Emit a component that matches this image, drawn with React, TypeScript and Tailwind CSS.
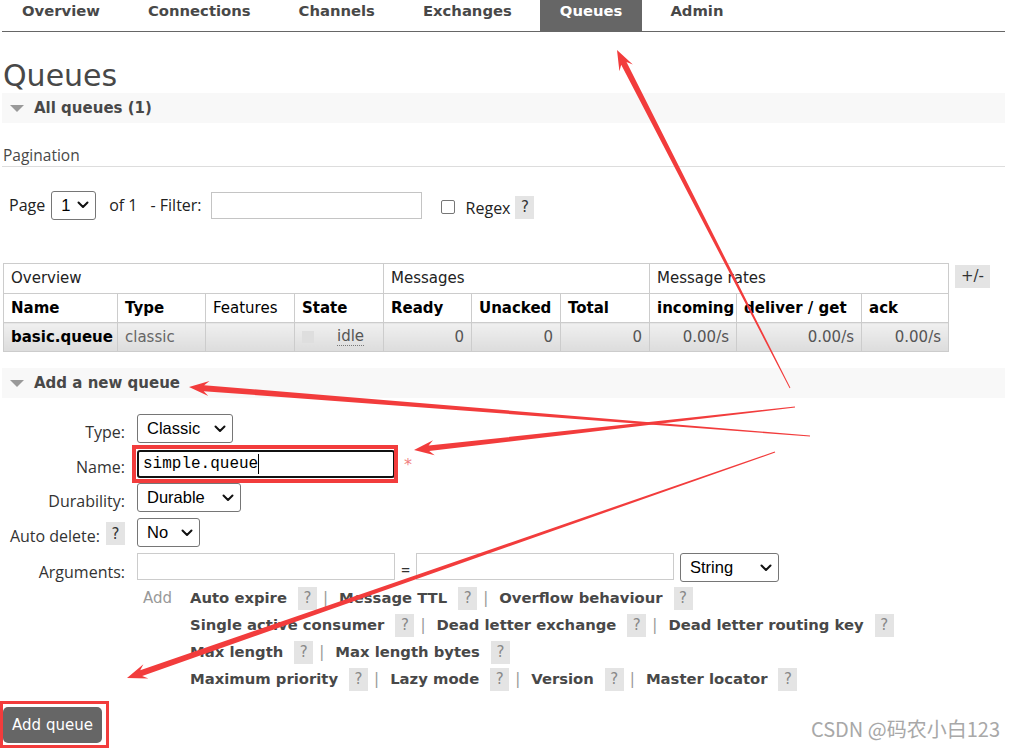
import React from "react";

const SANS = "font-['DejaVu_Sans','Verdana',sans-serif]";
const UI = "font-['Open_Sans','Noto_Sans',sans-serif]";
const ARIAL = "font-['Liberation_Sans','Arial',sans-serif]";

function Chevron() {
  return (
    <svg width="12" height="8" viewBox="0 0 12 8" className="shrink-0">
      <path d="M1.5 1.5 L6 6 L10.5 1.5" stroke="#111" strokeWidth="2" fill="none" strokeLinecap="round" strokeLinejoin="round" />
    </svg>
  );
}

function Sel({ w, label }: { w: string; label: string }) {
  return (
    <div
      className={`flex items-center justify-between ${w} h-[29px] border border-[#767676] rounded-[3px] bg-white pl-[9px] pr-[6px] ${ARIAL} text-[16.5px] text-black`}
    >
      <span>{label}</span>
      <Chevron />
    </div>
  );
}

function Help({ dark }: { dark?: boolean }) {
  return (
    <span
      className={`inline-flex items-center justify-center w-[19px] h-[23px] bg-[#e4e4e4] ${SANS} text-[15px] font-normal ${
        dark ? "text-[#333]" : "text-[#888]"
      }`}
    >
      ?
    </span>
  );
}

type Pt = [number, number];
function arrowPts(hx: number, hy: number, tx: number, ty: number, headLen: number, headW: number, wNear: number, wFar: number) {
  const dx = tx - hx;
  const dy = ty - hy;
  const len = Math.hypot(dx, dy);
  const ux = dx / len;
  const uy = dy / len;
  const nx = -uy;
  const ny = ux;
  const bx = hx + ux * headLen;
  const by = hy + uy * headLen;
  const nxp = hx + ux * (headLen - 5);
  const nyp = hy + uy * (headLen - 5);
  const pts: Pt[] = [
    [hx, hy],
    [bx + (nx * headW) / 2, by + (ny * headW) / 2],
    [nxp + (nx * wNear) / 2, nyp + (ny * wNear) / 2],
    [tx + (nx * wFar) / 2, ty + (ny * wFar) / 2],
    [tx - (nx * wFar) / 2, ty - (ny * wFar) / 2],
    [nxp - (nx * wNear) / 2, nyp - (ny * wNear) / 2],
    [bx - (nx * headW) / 2, by - (ny * headW) / 2],
  ];
  return pts.map((p) => `${p[0].toFixed(1)},${p[1].toFixed(1)}`).join(" ");
}

const tabs = ["Overview", "Connections", "Channels", "Exchanges", "Queues", "Admin"];

const props: string[][] = [
  ["Auto expire", "Message TTL", "Overflow behaviour"],
  ["Single active consumer", "Dead letter exchange", "Dead letter routing key"],
  ["Max length", "Max length bytes"],
  ["Maximum priority", "Lazy mode", "Version", "Master locator"],
];

function SectionHeader({ title }: { title: string }) {
  return (
    <div className="flex items-center h-[30px] bg-[#f8f8f8]">
      <svg width="14" height="7" viewBox="0 0 14 7" className="ml-[8px]">
        <polygon points="0,0 14,0 7,7" fill="#999" />
      </svg>
      <span className={`ml-[10px] ${SANS} font-bold text-[15px] text-[#484848]`}>{title}</span>
    </div>
  );
}

export default function App() {
  const th1 = `border border-[#ccc] text-left font-normal px-[7px] h-[30px] text-[#222]`;
  const th2 = `border border-[#ccc] text-left font-bold px-[7px] h-[29px] text-black`;
  const td = `border border-[#ccc] px-[7px] h-[29px] bg-linear-to-b from-[#f0f0f0] to-[#dcdcdc]`;
  const num = `${td} text-right text-[#555]`;

  return (
    <div className={`relative w-[1012px] h-[748px] overflow-hidden bg-white ${SANS} text-[15px] text-[#484848]`}>
      <div className="pl-[2px] pr-[7px]">
        {/* nav */}
        <div className="flex h-[32px] border-b border-[#666]">
          {tabs.map((t) => (
            <div
              key={t}
              className={`h-[31px] px-[20px] mr-[8px] pt-[2px] leading-[18px] font-bold text-[14.8px] ${
                t === "Queues" ? "bg-[#666] text-white" : "text-[#484848]"
              }`}
            >
              {t}
            </div>
          ))}
        </div>

        <h1 className="mt-[26px] ml-[1px] text-[30px] leading-[35px] font-normal text-[#484848]">Queues</h1>

        <SectionHeader title="All queues (1)" />

        <div className={`mt-[22px] pl-[1px] h-[22px] leading-[21px] border-b border-[#ddd] ${UI} text-[15.5px] text-[#484848]`}>
          Pagination
        </div>

        {/* pagination row */}
        <div className={`mt-[23px] flex items-center h-[30px] ${UI} text-[16px] text-[#222]`}>
          <span className="ml-[7px]">Page</span>
          <div className="ml-[6px]">
            <Sel w="w-[45px]" label="1" />
          </div>
          <span className="ml-[13px]">of 1</span>
          <span className="ml-[13px]">- Filter:</span>
          <div className="ml-[9px] w-[211px] h-[27px] border border-[#c4c4c4] bg-white" />
          <div className="ml-[19px] mt-[4px] w-[14px] h-[14px] border border-[#767676] rounded-[2px] bg-white" />
          <span className="ml-[11px] mt-[6px]">Regex</span>
          <span className="ml-[5px] mt-[3px]">
            <Help dark />
          </span>
        </div>

        {/* table */}
        <div className="mt-[43px] ml-[1px] flex items-start">
          <table className="table-fixed border-collapse w-[946px] text-[15px]">
            <colgroup>
              <col className="w-[114px]" />
              <col className="w-[88px]" />
              <col className="w-[89px]" />
              <col className="w-[89px]" />
              <col className="w-[88px]" />
              <col className="w-[89px]" />
              <col className="w-[89px]" />
              <col className="w-[87px]" />
              <col className="w-[125px]" />
              <col className="w-[87px]" />
            </colgroup>
            <thead>
              <tr>
                <th colSpan={4} className={th1}>Overview</th>
                <th colSpan={3} className={th1}>Messages</th>
                <th colSpan={3} className={th1}>Message rates</th>
              </tr>
              <tr>
                <th className={th2}>Name</th>
                <th className={th2}>Type</th>
                <th className={`${th2} font-normal`}>Features</th>
                <th className={th2}>State</th>
                <th className={th2}>Ready</th>
                <th className={th2}>Unacked</th>
                <th className={th2}>Total</th>
                <th className={th2}>incoming</th>
                <th className={th2}>deliver / get</th>
                <th className={th2}>ack</th>
              </tr>
            </thead>
            <tbody>
              <tr>
                <td className={`${td} font-bold text-black`}>basic.queue</td>
                <td className={`${td} text-[#666]`}>classic</td>
                <td className={td}></td>
                <td className={td}>
                  <div className="flex items-center">
                    <span className="w-[12px] h-[12px] bg-[#dedede]" />
                    <span className="ml-[23px] text-[#555] border-b border-dotted border-[#777] leading-[17px]">idle</span>
                  </div>
                </td>
                <td className={num}>0</td>
                <td className={num}>0</td>
                <td className={num}>0</td>
                <td className={num}>0.00/s</td>
                <td className={num}>0.00/s</td>
                <td className={num}>0.00/s</td>
              </tr>
            </tbody>
          </table>
          <div className="ml-[6px] mt-[2px] w-[35px] h-[23px] bg-[#e4e4e4] flex items-center justify-center text-[#333] text-[15px]">
            +/-
          </div>
        </div>

        <div className="mt-[16px]">
          <SectionHeader title="Add a new queue" />
        </div>

        {/* form */}
        <div className={`mt-[16px] flex flex-col`}>
          <div className="flex items-center h-[29px]">
            <div className={`w-[123px] text-right pt-[6px] ${UI} text-[16px] leading-[20px] text-[#333]`}>Type:</div>
            <div className="ml-[12px]">
              <Sel w="w-[96px]" label="Classic" />
            </div>
          </div>

          <div className="mt-[7px] flex items-center h-[27px]">
            <div className={`w-[123px] text-right pt-[6px] ${UI} text-[16px] leading-[20px] text-[#333]`}>Name:</div>
            <div className="ml-[12px] relative">
              <div className="w-[258px] h-[28px] border-2 border-[#111] rounded-[3px] bg-white flex items-center pl-[4px] font-['Liberation_Mono','Courier_New',monospace] text-[16px] text-black">
                <span>simple.queue</span>
                <span className="w-[1px] h-[20px] bg-black" />
              </div>
              <span className="absolute left-[-5px] right-[-3px] top-[-5px] bottom-[-5px] border-[4px] border-[#f23c3c]" />
            </div>
            <span className={`ml-[9px] mt-[2px] text-[#f08080] text-[16px] ${SANS}`}>*</span>
          </div>

          <div className="mt-[6px] flex items-center h-[29px]">
            <div className={`w-[123px] text-right pt-[6px] ${UI} text-[16px] leading-[20px] text-[#333]`}>Durability:</div>
            <div className="ml-[12px]">
              <Sel w="w-[104px]" label="Durable" />
            </div>
          </div>

          <div className="mt-[6px] flex items-center h-[29px]">
            <div className={`w-[123px] flex justify-end items-center ${UI} text-[16px] leading-[20px] text-[#333]`}>
              <span className="pt-[6px]">Auto delete:</span>
              <span className="ml-[6px] mt-[2px]">
                <Help dark />
              </span>
            </div>
            <div className="ml-[12px]">
              <Sel w="w-[63px]" label="No" />
            </div>
          </div>

          <div className="mt-[6px] flex items-start h-[29px]">
            <div className={`w-[123px] text-right pt-[9px] ${UI} text-[16px] leading-[20px] text-[#333]`}>Arguments:</div>
            <div className="ml-[12px] w-[258px] h-[27px] border border-[#ccc] bg-white" />
            <span className={`w-[21px] text-center pt-[5px] ${UI} text-[16px] text-[#333]`}>=</span>
            <div className="w-[258px] h-[27px] border border-[#ccc] bg-white" />
            <div className="ml-[6px]">
              <Sel w="w-[99px]" label="String" />
            </div>
          </div>

          {/* properties */}
          <div className="mt-[3px] flex">
            <div className="ml-[141px] w-[47px] pt-[3px] leading-[20px] text-[#999] text-[15px]">Add</div>
            <div className="flex flex-col">
              {props.map((row, ri) => (
                <div key={ri} className="flex items-center h-[27px]">
                  {row.map((p, i) => (
                    <React.Fragment key={p}>
                      {i > 0 && (
                        <>
                          <span className="ml-[6px] text-[#999] font-normal">|</span>
                          <span className="ml-[11px]" />
                        </>
                      )}
                      <span className="font-bold text-[#484848] text-[14.8px]">{p}</span>
                      <span className="ml-[11px]">
                        <Help />
                      </span>
                    </React.Fragment>
                  ))}
                </div>
              ))}
            </div>
          </div>

          <div className="mt-[14px] ml-[1px] relative w-[99px]">
            <div className="w-[99px] h-[36px] rounded-[5px] bg-[#666] text-white text-[15px] flex items-center justify-center">
              Add queue
            </div>
            <span className="absolute left-[-3px] right-[-7px] top-[-6px] bottom-[-5px] border-[3px] border-[#f23c3c]" />
          </div>
        </div>
      </div>

      {/* annotation arrows */}
      <svg className="absolute inset-0 pointer-events-none" width="1012" height="748" viewBox="0 0 1012 748">
        <polygon points={arrowPts(617, 50, 790, 388, 20, 15, 6, 1)} fill="#f23c3c" />
        <polygon points={arrowPts(189, 387, 810, 436, 20, 15, 6, 1)} fill="#f23c3c" />
        <polygon points={arrowPts(414, 450, 795, 407, 20, 15, 5.5, 1)} fill="#f23c3c" />
        <polygon points={arrowPts(127, 678, 775, 452, 20, 15, 6, 1)} fill="#f23c3c" />
      </svg>

      {/* watermark */}
      <div className="absolute right-[12px] bottom-[7px] font-['Noto_Sans_CJK_SC',sans-serif] text-[20px] leading-[24px] text-[#a8a8a8]">
        CSDN @码农小白123
      </div>
    </div>
  );
}
